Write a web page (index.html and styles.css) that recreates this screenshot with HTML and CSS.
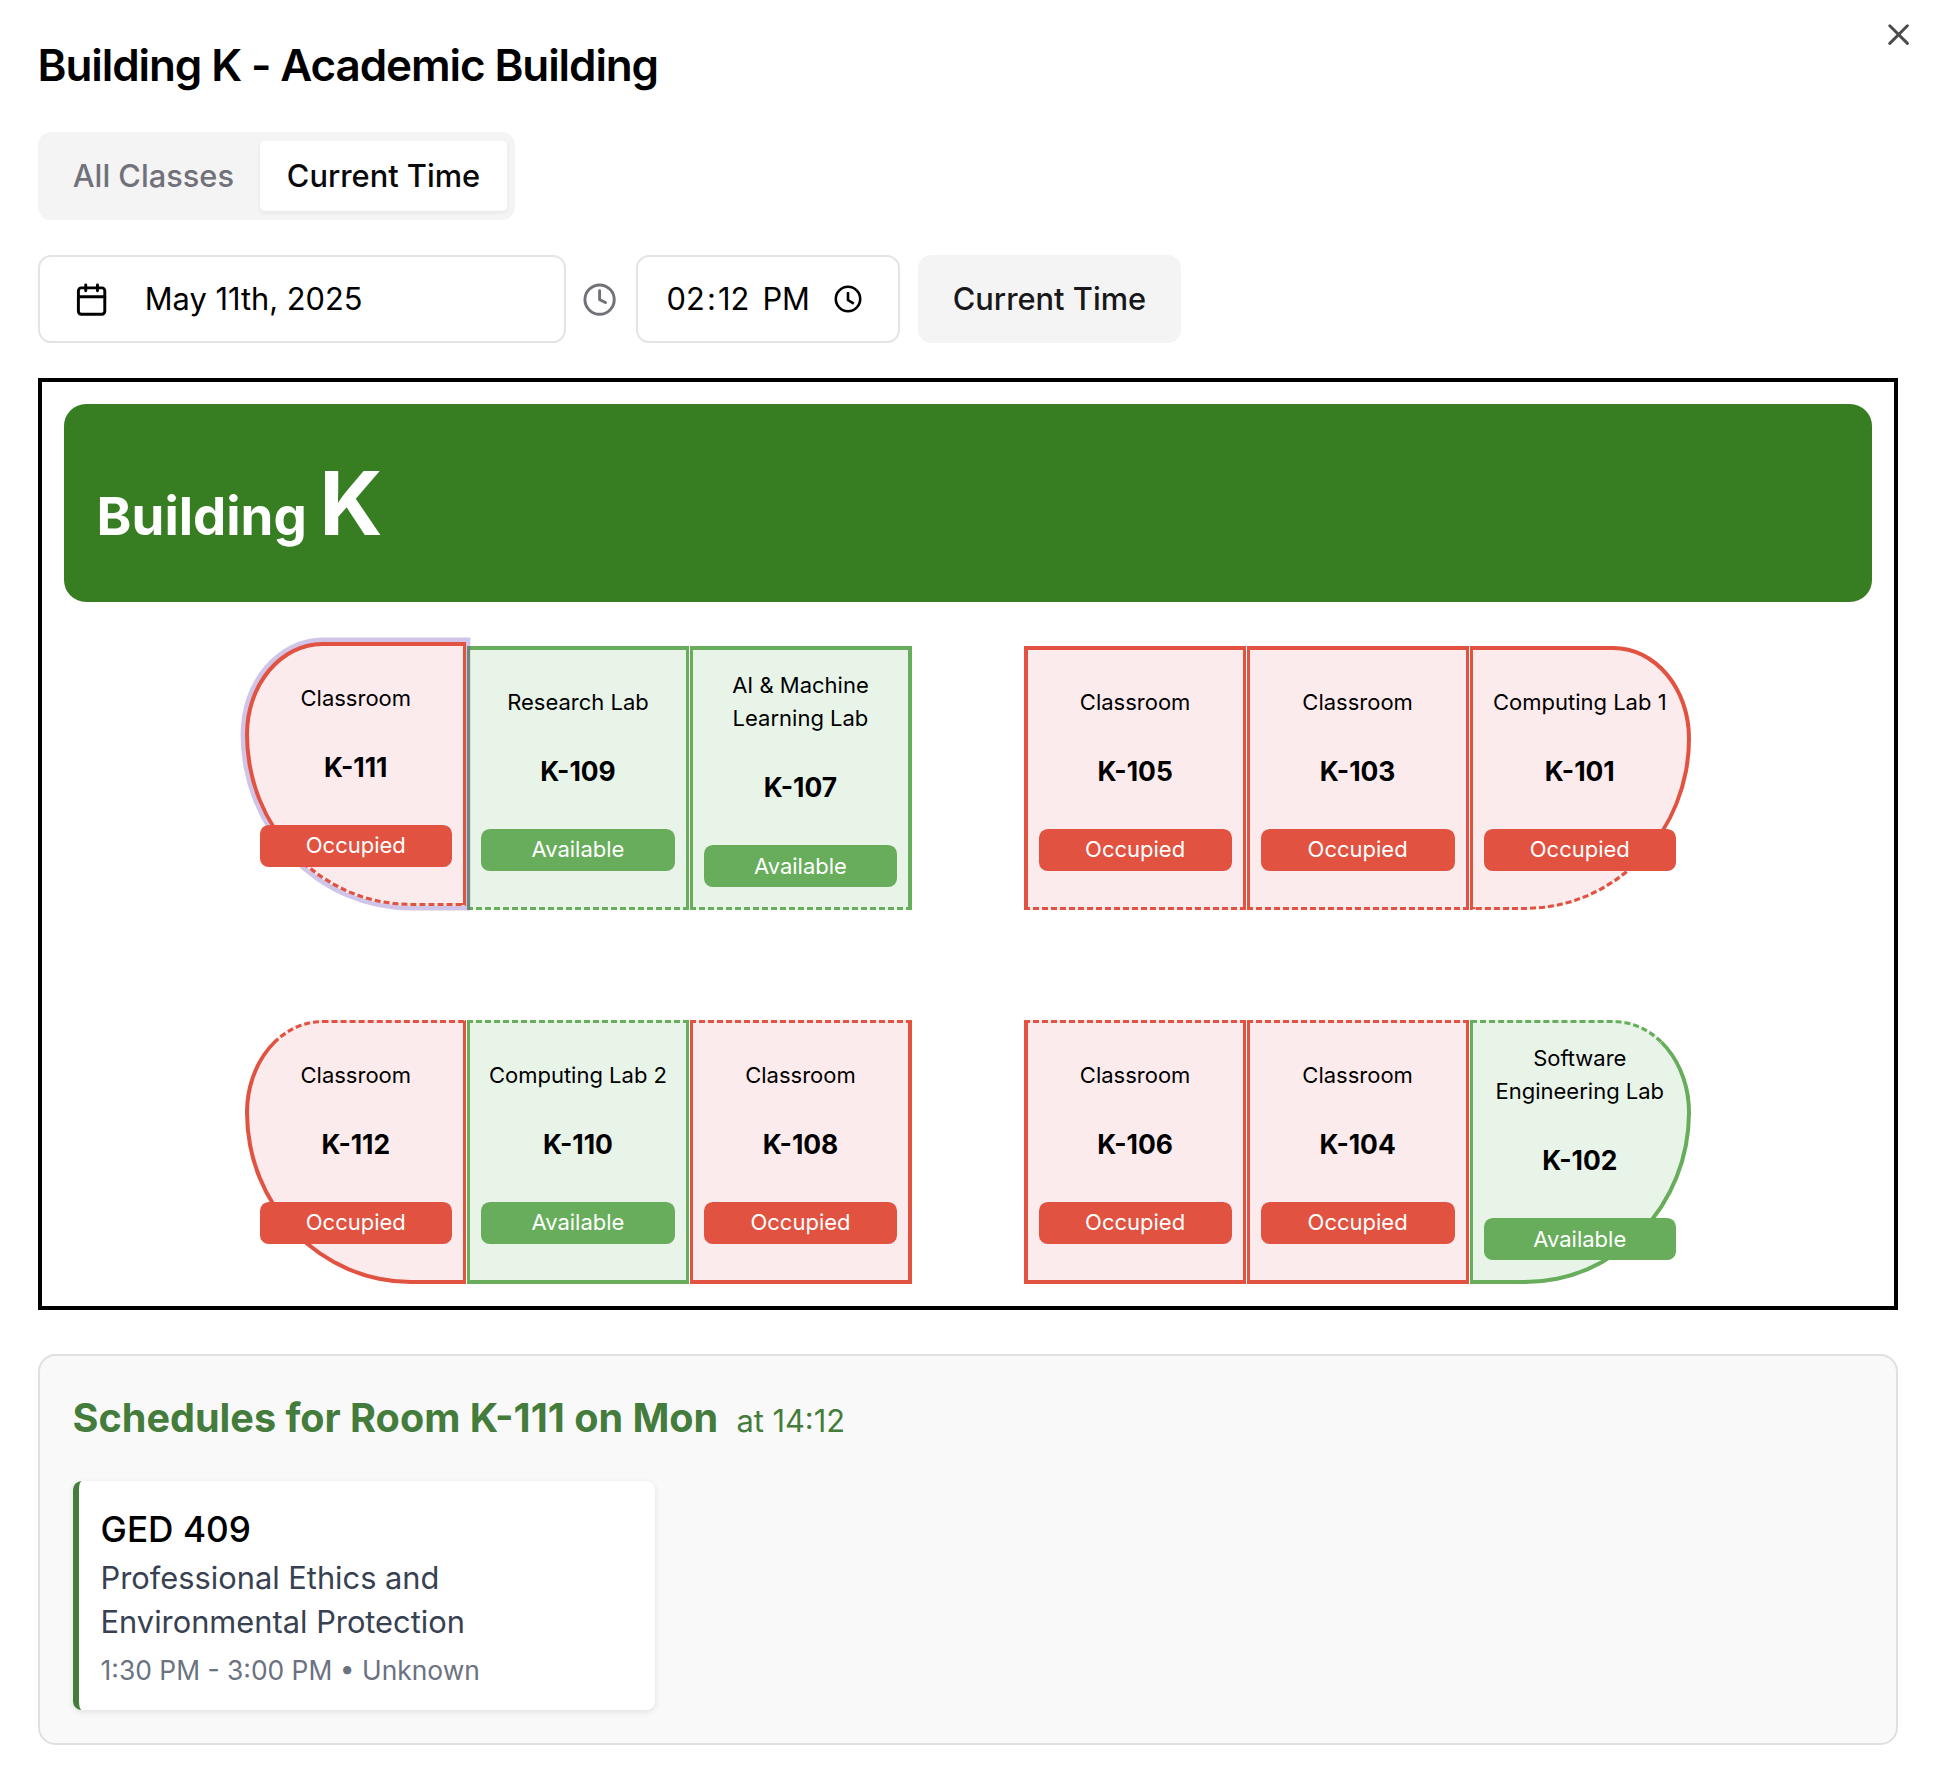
FILE: index.html
```html
<!DOCTYPE html>
<html lang="en">
<head>
  <meta charset="UTF-8">
  <meta name="viewport" content="width=device-width, initial-scale=1.0">
  <title>Building K - Academic Building</title>
  <link rel="stylesheet" href="styles.css">
</head>
<body>
  <div class="dialog">
    <button class="close" aria-label="Close">
      <svg class="icon" viewBox="0 0 24 24"><path d="M18 6 6 18"/><path d="m6 6 12 12"/></svg>
    </button>

    <h1 class="title">Building K - Academic Building</h1>

    <!-- Tabs -->
    <div class="tabs">
      <button class="tab">All Classes</button>
      <button class="tab active">Current Time</button>
    </div>

    <!-- Date and time controls -->
    <div class="controls">
      <button class="date-btn">
        <svg class="icon" viewBox="0 0 24 24"><path d="M8 2v4"/><path d="M16 2v4"/><rect width="18" height="18" x="3" y="4" rx="2"/><path d="M3 10h18"/></svg>
        <span>May 11th, 2025</span>
      </button>
      <svg class="icon muted" viewBox="0 0 24 24"><circle cx="12" cy="12" r="10"/><path d="M12 6v6l4 2"/></svg>
      <div class="time-input">
        <div class="time-value"><span>02</span>:<span>12</span> <span>PM</span></div>
        <svg class="time-icon" viewBox="0 0 28 28"><circle cx="14" cy="14" r="12.2"/><path d="M14 7v8l5.8 3.6"/></svg>
      </div>
      <button class="now-btn">Current Time</button>
    </div>

    <!-- Floor map -->
    <div class="map">
      <div class="banner">Building <span class="letter">K</span></div>

      <div class="floor">
        <div class="row top">
          <div class="group">
            <div class="room occupied left selected">
              <div class="name">Classroom</div>
              <div class="number">K-111</div>
              <div class="status">Occupied</div>
            </div>
            <div class="room available">
              <div class="name">Research Lab</div>
              <div class="number">K-109</div>
              <div class="status">Available</div>
            </div>
            <div class="room available">
              <div class="name">AI &amp; Machine Learning Lab</div>
              <div class="number">K-107</div>
              <div class="status">Available</div>
            </div>
          </div>
          <div class="group">
            <div class="room occupied">
              <div class="name">Classroom</div>
              <div class="number">K-105</div>
              <div class="status">Occupied</div>
            </div>
            <div class="room occupied">
              <div class="name">Classroom</div>
              <div class="number">K-103</div>
              <div class="status">Occupied</div>
            </div>
            <div class="room occupied right">
              <div class="name">Computing Lab 1</div>
              <div class="number">K-101</div>
              <div class="status">Occupied</div>
            </div>
          </div>
        </div>

        <div class="row bottom">
          <div class="group">
            <div class="room occupied left">
              <div class="name">Classroom</div>
              <div class="number">K-112</div>
              <div class="status">Occupied</div>
            </div>
            <div class="room available">
              <div class="name">Computing Lab 2</div>
              <div class="number">K-110</div>
              <div class="status">Available</div>
            </div>
            <div class="room occupied">
              <div class="name">Classroom</div>
              <div class="number">K-108</div>
              <div class="status">Occupied</div>
            </div>
          </div>
          <div class="group">
            <div class="room occupied">
              <div class="name">Classroom</div>
              <div class="number">K-106</div>
              <div class="status">Occupied</div>
            </div>
            <div class="room occupied">
              <div class="name">Classroom</div>
              <div class="number">K-104</div>
              <div class="status">Occupied</div>
            </div>
            <div class="room available right">
              <div class="name">Software Engineering Lab</div>
              <div class="number">K-102</div>
              <div class="status">Available</div>
            </div>
          </div>
        </div>
      </div>
    </div>

    <!-- Schedules of the selected room -->
    <div class="schedules">
      <h2 class="schedules-title">Schedules for Room K-111 on Mon <span class="at">at 14:12</span></h2>
      <div class="schedule-grid">
        <div class="schedule">
          <div class="course">GED 409</div>
          <div class="course-name">Professional Ethics and Environmental Protection</div>
          <div class="course-time">1:30 PM - 3:00 PM • Unknown</div>
        </div>
      </div>
    </div>
  </div>
</body>
</html>
```

FILE: styles.css
```css
* {
  box-sizing: border-box;
}
html {
  font-size: 35.2px;
}
body {
  margin: 0;
  background: #fff;
  color: #000;
  font-family: Inter, sans-serif;
  line-height: 1.5;
}
button {
  font: inherit;
  color: inherit;
  background: none;
  border: none;
  padding: 0;
}
h1, h2 {
  margin: 0;
}
.dialog {
  position: relative;
  padding: 43px 42px 0 37.6px;
}
.icon {
  display: block;
  width: 1rem;
  height: 1rem;
  flex-shrink: 0;
  fill: none;
  stroke: currentColor;
  stroke-width: 2;
  stroke-linecap: round;
  stroke-linejoin: round;
}
.close {
  position: absolute;
  top: 17px;
  right: 23.4px;
  opacity: 0.7;
}
.title {
  font-size: 1.25rem;
  font-weight: 600;
  line-height: 1;
  letter-spacing: -0.025em;
  margin-bottom: 45px;
}

/* tabs */
.tabs {
  display: inline-flex;
  align-items: center;
  height: 2.5rem;
  padding: 0.25rem;
  background: #f4f4f4;
  border-radius: 13.2px;
}
.tab {
  padding: 0.375rem 0.75rem;
  font-size: 0.875rem;
  font-weight: 500;
  line-height: 1.25rem;
  color: #71717a;
  border-radius: 4.4px;
}
.tab.active {
  background: #fff;
  color: #09090b;
  box-shadow: 0 2px 4px rgba(0, 0, 0, 0.06);
}

/* controls */
.controls {
  display: flex;
  align-items: center;
  gap: 0.5rem;
  margin-top: 1rem;
  font-size: 0.875rem;
}
.date-btn {
  display: flex;
  align-items: center;
  gap: 36px;
  width: 528px;
  height: 2.5rem;
  padding: 0 34px;
  border: 2px solid #e4e4e4;
  border-radius: 13.2px;
}
.muted {
  margin: 0 1px 0 -1px;
  color: #71717a;
}
.time-input {
  display: flex;
  align-items: center;
  justify-content: space-between;
  width: 264px;
  height: 2.5rem;
  padding: 0 36px 0 26.4px;
  border: 2px solid #e4e4e4;
  border-radius: 13.2px;
}
.time-value {
  white-space: pre;
}
.time-value span {
  padding: 0 2.2px;
}
.time-icon {
  width: 28px;
  height: 28px;
  fill: none;
  stroke: #000;
  stroke-width: 2.6;
}
.now-btn {
  height: 2.5rem;
  padding: 0 1rem;
  font-weight: 500;
  color: #18181b;
  background: #f4f4f4;
  border-radius: 13.2px;
}

/* map */
.map {
  margin-top: 1rem;
  padding: 22px;
  border: 4px solid #000;
}
.banner {
  height: 198px;
  padding: 33px;
  background: #377e22;
  color: #fff;
  border-radius: 22px;
  font-size: 52.8px;
  font-weight: 700;
}
.letter {
  font-size: 88px;
}
.floor {
  display: flex;
  flex-direction: column;
  gap: 110px;
  width: calc(80% + 2px);
  margin: 44px auto 0;
}
.row {
  display: grid;
  grid-template-columns: 1fr 1fr;
  gap: 110.6px;
}
.group {
  display: grid;
  grid-template-columns: repeat(3, 1fr);
}
.room {
  display: flex;
  flex-direction: column;
  justify-content: center;
  height: 264px;
  margin: 0 0.5px;
  padding: 0 11px 1px;
  border: 3px solid;
  text-align: center;
}
.room:first-child {
  border-left-width: 4px;
}
.room:last-child {
  border-right-width: 4px;
}
.top .room {
  border-top-width: 4px;
  border-bottom-style: dashed;
}
.bottom .room {
  border-top-style: dashed;
  border-bottom-width: 4px;
}
.occupied {
  background: #fcebec;
  border-color: #e15241;
}
.available {
  background: #e9f4e9;
  border-color: #67ad5b;
}
.left {
  margin-left: 1.2px;
  border-radius: 35% 0 0 75% / 35% 0 0 65%;
}
.right {
  margin-right: 1.2px;
  border-radius: 0 35% 75% 0 / 0 35% 65% 0;
}
.selected {
  z-index: 1;
  transform: translateY(-4px);
  box-shadow: 0 0 0 4.4px rgba(103, 58, 183, 0.3);
}
.name {
  font-size: 22px;
}
.number {
  margin: 33px 0 37.4px;
  font-size: 26.4px;
  font-weight: 700;
}
.status {
  padding: 4.4px;
  font-size: 22px;
  color: #fff;
  border-radius: 8.8px;
}
.occupied .status {
  background: #e15241;
}
.available .status {
  background: #67ad5b;
}

/* schedules */
.schedules {
  margin-top: 44px;
  padding: 33px;
  background: #f9f9f9;
  border: 2px solid #e0e0e0;
  border-radius: 17.6px;
}
.schedules-title {
  font-size: 39.6px;
  font-weight: 700;
  color: #437c3b;
  margin-bottom: 32px;
}
.at {
  margin-left: 8.8px;
  font-size: 30.8px;
  font-weight: 400;
}
.schedule-grid {
  display: grid;
  grid-template-columns: repeat(3, 1fr);
  gap: 22px;
}
.schedule {
  padding: 22px 22px 21.2px;
  background: #fff;
  border-left: 6px solid #437c3b;
  border-radius: 8.8px;
  box-shadow: 0 2px 6px rgba(0, 0, 0, 0.1);
}
.course {
  font-size: 1rem;
  font-weight: 500;
}
.course-name {
  font-size: 0.875rem;
  line-height: 1.25rem;
  color: #374151;
}
.course-time {
  margin-top: 9.6px;
  font-size: 0.75rem;
  line-height: 1rem;
  color: #6b7280;
}
```
